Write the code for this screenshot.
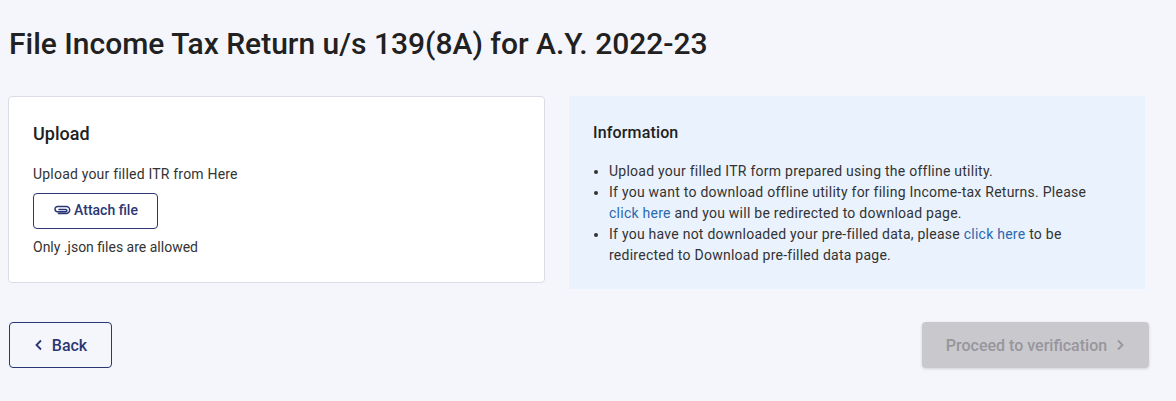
<style>
:global(body) {
    background: #f5f6fb;
    font-family: Roboto, sans-serif;
    color: #212121;
}
.page {
    padding: 0 27px 0 8px;
    height: 401px;
    box-sizing: border-box;
}
h1 {
    margin: 0 0 0 1px;
    padding-top: 25px;
    font-size: 30px;
    line-height: 38px;
    font-weight: 500;
}
.cols {
    display: flex;
    margin-top: 33px;
    gap: 24px;
}
.card {
    width: 537px;
    height: 187px;
    box-sizing: border-box;
    background: #fff;
    border: 1px solid #dcdce6;
    border-radius: 4px;
    padding: 26px 24px 0;
}
h2 {
    margin: 0;
    font-size: 18px;
    line-height: 22px;
    font-weight: 500;
}
.card p {
    margin: 0;
    font-size: 14px;
    line-height: 20px;
    color: #333;
}
.hint1 {
    padding-top: 19px;
    letter-spacing: 0.2px;
}
.attach {
    display: flex;
    align-items: center;
    justify-content: center;
    gap: 3px;
    width: 125px;
    height: 36px;
    margin: 9px 0 8px;
    padding: 0 0 2px;
    box-sizing: border-box;
    border: 1px solid #2b3674;
    border-radius: 4px;
    background: #fff;
    color: #2b3674;
    font: 500 14px Roboto, sans-serif;
}
.info {
    width: 576px;
    height: 193px;
    background: #eaf2fd;
    box-sizing: border-box;
    padding: 27px 40px 0 24px;
}
.info h3 {
    margin: 0;
    font-size: 16px;
    line-height: 20px;
    font-weight: 500;
    letter-spacing: 0.15px;
}
ul {
    margin: 18px 0 0;
    padding: 0 0 0 16px;
    font-size: 14px;
    line-height: 21px;
    letter-spacing: 0.25px;
    color: #333;
}
a {
    color: #2a68b0;
    text-decoration: none;
}
.actions {
    display: flex;
    justify-content: space-between;
    margin: 33px 0 0 1px;
}
.back, .next {
    display: flex;
    align-items: center;
    justify-content: center;
    gap: 8px;
    height: 46px;
    box-sizing: border-box;
    border-radius: 4px;
    font: 500 16px Roboto, sans-serif;
}
.back {
    width: 103px;
    background: transparent;
    color: #2b3674;
    border: 1px solid #2b3674;
}
.next {
    width: 227px;
    background: #c9c8cd;
    color: #97969c;
    border: 0;
    box-shadow: 0 1px 3px rgba(0, 0, 0, 0.15);
}
</style>

<div class="page">
    <h1>File Income Tax Return u/s 139(8A) for A.Y. 2022-23</h1>
    <div class="cols">
        <section class="card">
            <h2>Upload</h2>
            <p class="hint1">Upload your filled ITR from Here</p>
            <button class="attach">
                <svg width="18" height="18" viewBox="0 0 18 18" fill="none" stroke="currentColor" stroke-width="1.5" stroke-linecap="round"><path d="M5.5 12.5h7.7a3.5 3.5 0 0 0 0-7H4.6a2.6 2.6 0 0 0 0 5.2h8.2a1.1 1.1 0 0 0 0-2.2H6"/></svg>
                Attach file
            </button>
            <p>Only .json files are allowed</p>
        </section>
        <section class="info">
            <h3>Information</h3>
            <ul>
                <li>Upload your filled ITR form prepared using the offline utility.</li>
                <li>If you want to download offline utility for filing Income-tax Returns. Please <a href="#a">click here</a> and you will be redirected to download page.</li>
                <li>If you have not downloaded your pre-filled data, please <a href="#b">click here</a> to be redirected to Download pre-filled data page.</li>
            </ul>
        </section>
    </div>
    <div class="actions">
        <button class="back">
            <svg width="10" height="12" viewBox="0 0 10 12" fill="none" stroke="currentColor" stroke-width="1.8"><path d="M7 1.5 2.5 6 7 10.5"/></svg>
            Back
        </button>
        <button class="next">
            Proceed to verification
            <svg width="10" height="12" viewBox="0 0 10 12" fill="none" stroke="currentColor" stroke-width="1.8"><path d="M3 1.5 7.5 6 3 10.5"/></svg>
        </button>
    </div>
</div>
